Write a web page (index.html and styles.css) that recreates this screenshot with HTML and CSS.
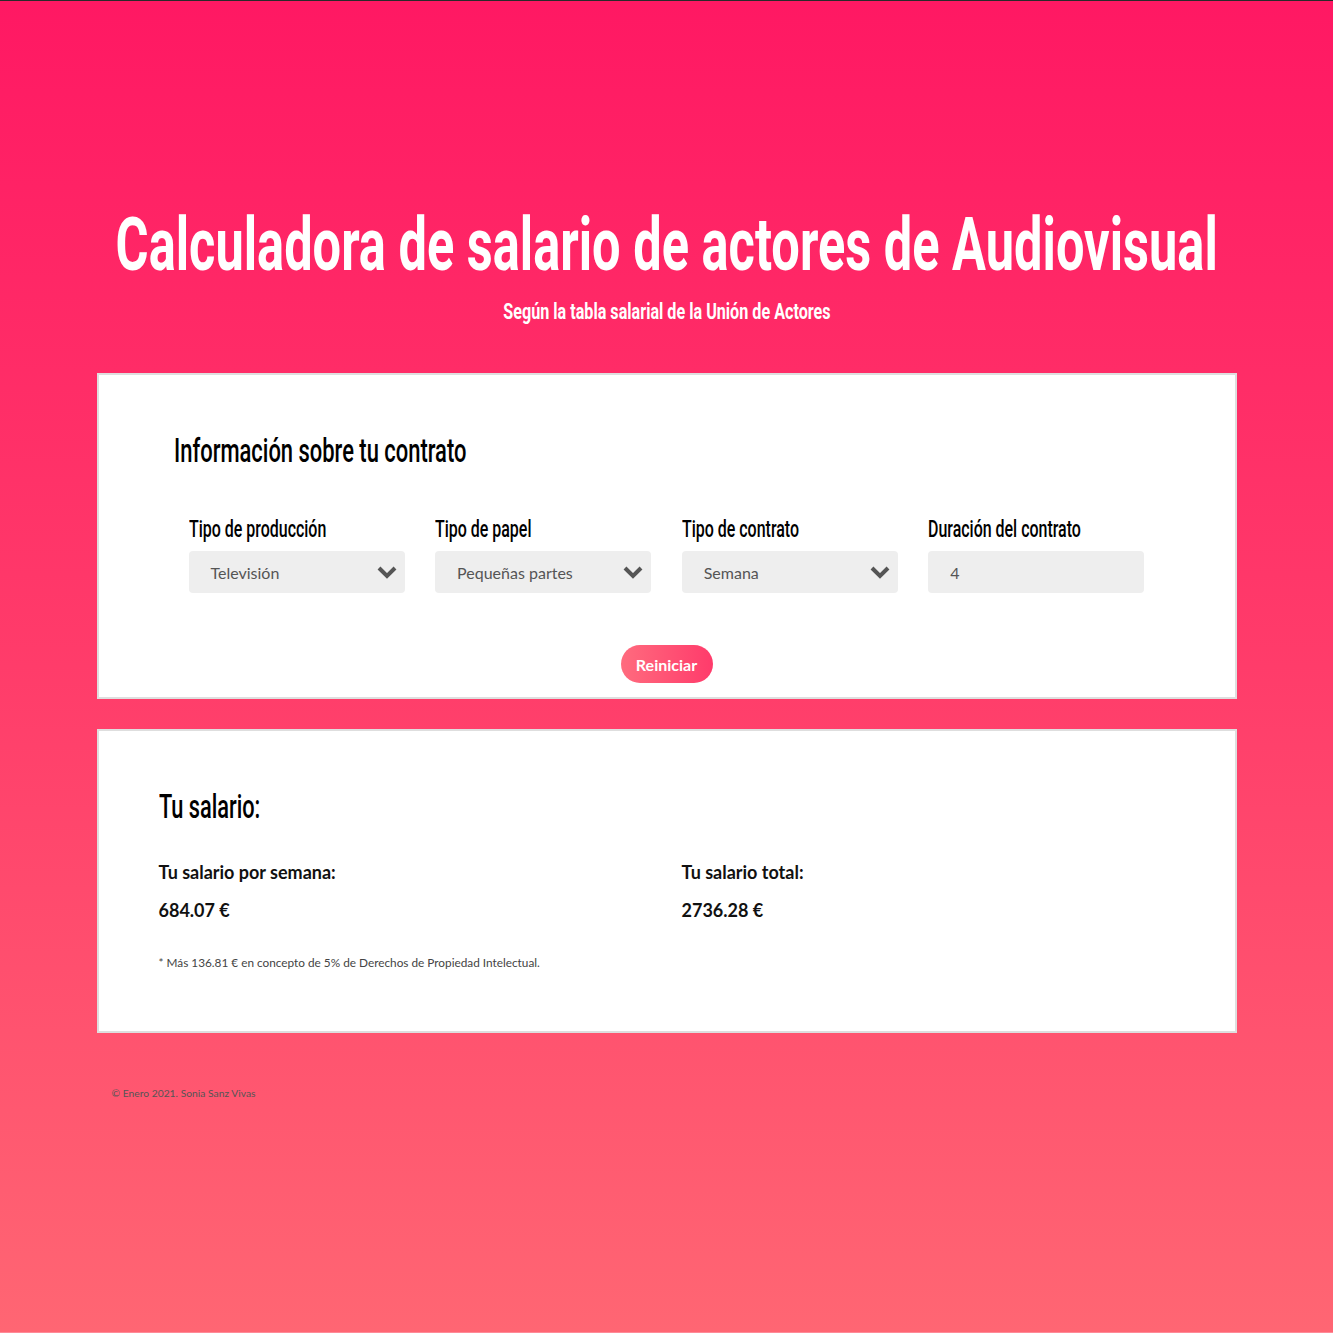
FILE: index.html
```html
<!DOCTYPE html>
<html lang="es">
<head>
<meta charset="utf-8">
<title>Calculadora de salario de actores de Audiovisual</title>
<link rel="stylesheet" href="styles.css">
</head>
<body>
<div class="page">
  <header class="hero">
    <h1 class="hero-title"><span class="narrow">Calculadora de salario de actores de Audiovisual</span></h1>
    <p class="hero-sub"><span class="narrow">Según la tabla salarial de la Unión de Actores</span></p>
  </header>

  <main class="container">
    <section class="card card-form">
      <h2 class="card-title form-title"><span class="narrow">Información sobre tu contrato</span></h2>
      <div class="fields">
        <div class="field">
          <label class="field-label"><span class="narrow">Tipo de producción</span></label>
          <div class="select">
            <span>Televisión</span>
            <svg class="chev" viewBox="0 0 20 14" width="20" height="14"><path d="M2 3 L10 11 L18 3" fill="none" stroke="#555" stroke-width="4"/></svg>
          </div>
        </div>
        <div class="field">
          <label class="field-label"><span class="narrow">Tipo de papel</span></label>
          <div class="select">
            <span>Pequeñas partes</span>
            <svg class="chev" viewBox="0 0 20 14" width="20" height="14"><path d="M2 3 L10 11 L18 3" fill="none" stroke="#555" stroke-width="4"/></svg>
          </div>
        </div>
        <div class="field">
          <label class="field-label"><span class="narrow">Tipo de contrato</span></label>
          <div class="select">
            <span>Semana</span>
            <svg class="chev" viewBox="0 0 20 14" width="20" height="14"><path d="M2 3 L10 11 L18 3" fill="none" stroke="#555" stroke-width="4"/></svg>
          </div>
        </div>
        <div class="field">
          <label class="field-label"><span class="narrow">Duración del contrato</span></label>
          <div class="select input"><span>4</span></div>
        </div>
      </div>
      <div class="actions">
        <button class="btn">Reiniciar</button>
      </div>
    </section>

    <section class="card card-result">
      <h2 class="card-title result-title"><span class="narrow">Tu salario:</span></h2>
      <div class="results">
        <div class="result">
          <p class="result-label">Tu salario por semana:</p>
          <p class="result-value">684.07 €</p>
        </div>
        <div class="result">
          <p class="result-label">Tu salario total:</p>
          <p class="result-value">2736.28 €</p>
        </div>
      </div>
      <p class="note">* Más 136.81 € en concepto de 5% de Derechos de Propiedad Intelectual.</p>
    </section>
  </main>

  <footer class="footer">© Enero 2021. Sonia Sanz Vivas</footer>
</div>
</body>
</html>
```

FILE: styles.css
```css
* { box-sizing: border-box; }
html, body { margin: 0; padding: 0; }
body {
  font-family: Lato, "Noto Sans", sans-serif;
  color: #111;
  min-height: 1333px;
  background: linear-gradient(180deg, #ff1863 0%, #ff3c6a 50%, #ff6673 100%);
  border-top: 1px solid #2a2a2a;
  border-bottom: 1px solid #ff8a98;
}
.page { min-height: 1331px; }

.narrow {
  display: inline-block;
  white-space: nowrap;
  font-family: Roboto, "Liberation Sans", sans-serif;
  transform-origin: left center;
  transform: scaleX(var(--sx, 0.66));
}

.hero { padding-top: 198px; color: #fff; }
.hero-title, .hero-sub { display: flex; justify-content: center; }
.hero-title {
  margin: 0;
  font-weight: 700;
  font-size: 75px;
  line-height: 90px;
}
.hero-title .narrow { --sx: 0.674; transform-origin: center; }
.hero-sub {
  margin: 10px 0 0;
  font-weight: 700;
  font-size: 22.5px;
  line-height: 24px;
}
.hero-sub .narrow { --sx: 0.718; transform-origin: center; }

.container { width: 1140px; margin: 50px auto 0; display: flex; flex-direction: column; gap: 30px; }
.card { background: #fff; border: 2px solid #dedede; }

.card-form { height: 326px; padding: 57px 90px 0; }
.card-title {
  margin: 0;
  font-weight: 500;
  font-size: 33px;
  line-height: 34px;
  color: #000;
}
.card-title .narrow { --sx: 0.665; }
.result-title .narrow { --sx: 0.659; }
.form-title { margin-left: -15px; }

.fields { display: grid; grid-template-columns: repeat(4, 216px); column-gap: 30.6px; margin-top: 48px; }
.field-label {
  display: block;
  font-weight: 500;
  font-size: 24px;
  line-height: 24px;
  color: #000;
  margin-bottom: 10px;
}
.field-label .narrow { --sx: 0.665; }
.select {
  height: 42px;
  background: #eeeeee;
  border-radius: 4px;
  padding: 0 8px 0 22px;
  display: flex;
  align-items: center;
  justify-content: space-between;
  font-size: 16px;
  color: #555;
}

.actions { display: flex; justify-content: center; margin-top: 52px; }
.btn {
  border: none;
  height: 38px;
  width: 92px;
  border-radius: 19px;
  background: linear-gradient(90deg, #ff6b7e 0%, #ff3b6b 100%);
  color: #fff;
  font-family: Lato, sans-serif;
  font-weight: 700;
  font-size: 16px;
  padding: 0;
}

.card-result { height: 304px; padding: 57px 60px 0; }
.results { display: grid; grid-template-columns: 523px 1fr; margin-top: 36px; }
.result-label { margin: 0; font-weight: 700; font-size: 18px; line-height: 24px; }
.result-value { margin: 14px 0 0; font-weight: 700; font-size: 18px; line-height: 24px; }
.note { margin: 34px 0 0; font-size: 11.8px; line-height: 14px; color: #444; }

.footer { width: 1140px; margin: 54px auto 0; padding-left: 15px; font-size: 10.3px; color: #555; }
```
